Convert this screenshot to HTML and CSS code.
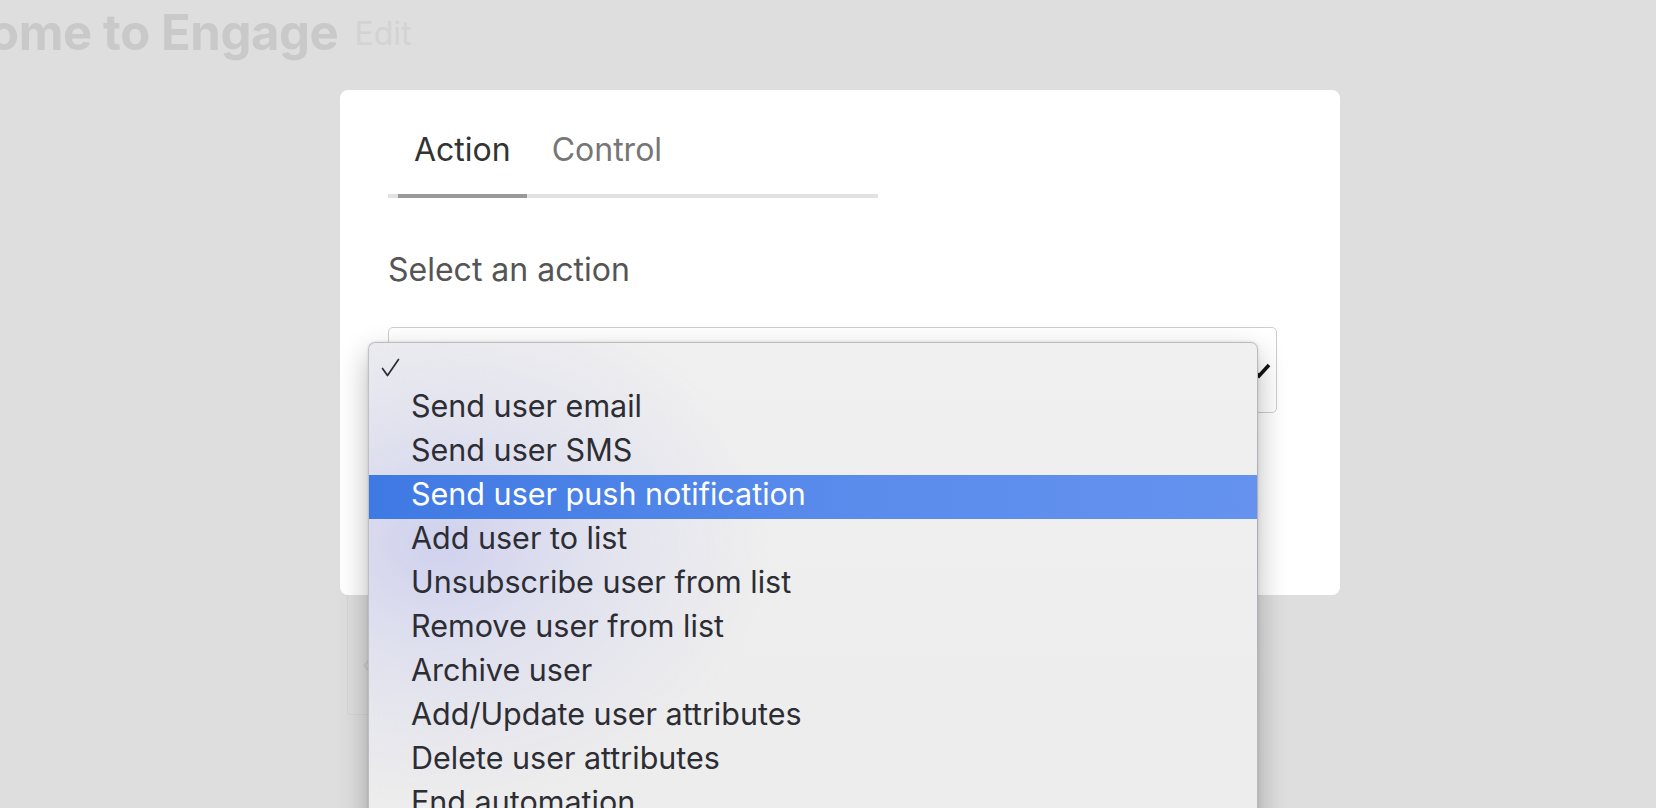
FILE: index.html
```html
<!DOCTYPE html>
<html lang="en">
<head>
<meta charset="utf-8">
<title>Engage</title>
<link rel="stylesheet" href="styles.css">
</head>
<body>
<div class="page">
  <header class="page-header">
    <h1 class="page-title">Welcome to Engage</h1>
    <span class="edit-link">Edit</span>
  </header>

  <div class="stage">
    <section class="modal">
      <nav class="tabs">
        <div class="tab tab-active">Action</div>
        <div class="tab tab-second">Control</div>
      </nav>
      <div class="field-label">Select an action</div>
      <div class="select-wrap">
        <div class="select-box">
          <svg class="select-arrow" width="24" height="24" viewBox="0 0 24 24" aria-hidden="true">
            <path d="M4 11 L10 17 L20 6" fill="none" stroke="#111" stroke-width="3.6" stroke-linecap="butt" stroke-linejoin="miter"/>
          </svg>
        </div>
        <ul class="menu">
          <li class="menu-item menu-checked">
            <svg class="check" width="20" height="20" viewBox="0 0 20 20" aria-hidden="true">
              <path d="M1.5 10.5 L6.5 17.5 L17.5 1.5" fill="none" stroke="#2d2d34" stroke-width="1.7" stroke-linecap="round" stroke-linejoin="round"/>
            </svg>
          </li>
          <li class="menu-item">Send user email</li>
          <li class="menu-item">Send user SMS</li>
          <li class="menu-item menu-hover">Send user push notification</li>
          <li class="menu-item">Add user to list</li>
          <li class="menu-item">Unsubscribe user from list</li>
          <li class="menu-item">Remove user from list</li>
          <li class="menu-item">Archive user</li>
          <li class="menu-item">Add/Update user attributes</li>
          <li class="menu-item">Delete user attributes</li>
          <li class="menu-item">End automation</li>
          <li class="menu-item">Wait</li>
        </ul>
      </div>
    </section>
    <div class="ghost-box"><span class="ghost-icon">‹</span></div>
  </div>
</div>
</body>
</html>
```

FILE: styles.css
```css
html, body {
  margin: 0;
  padding: 0;
  height: 100%;
  overflow: hidden;
}

body {
  background: #dedede;
  font-family: Inter, "Noto Sans", "Liberation Sans", sans-serif;
}

.page {
  width: 1656px;
  height: 808px;
  overflow: hidden;
}

.page-header {
  display: flex;
  align-items: flex-start;
  gap: 16px;
  padding-top: 3px;
  margin-left: -129px;
  height: 60px;
}

.page-title {
  margin: 0;
  font-size: 49px;
  line-height: 60px;
  font-weight: 700;
  color: #c9c9c9;
  letter-spacing: -0.4px;
  white-space: nowrap;
}

.edit-link {
  font-size: 32px;
  line-height: 60px;
  padding-top: 1px;
  color: #d3d3d3;
}

.stage {
  margin-left: 340px;
  margin-top: 27px;
}

.modal {
  position: relative;
  width: 1000px;
  height: 505px;
  box-sizing: border-box;
  background: #ffffff;
  border-radius: 8px;
  padding: 40px 0 0 48px;
}

.tabs {
  display: flex;
  width: 490px;
  border-bottom: 4px solid #e2e2e2;
}

.tab {
  font-size: 32px;
  line-height: 40px;
  padding: 0 16px 24px;
  color: #767676;
  margin-bottom: -4px;
  border-bottom: 4px solid transparent;
}

.tab-active {
  margin-left: 10px;
  color: #333333;
  border-bottom-color: #999999;
}

.tab-second {
  padding-left: 25px;
}

.field-label {
  margin-top: 52px;
  font-size: 32px;
  line-height: 40px;
  color: #555555;
}

.select-wrap {
  position: relative;
  margin-top: 37px;
  width: 889px;
}

.select-box {
  height: 86px;
  box-sizing: border-box;
  border: 1.5px solid #cdcdcd;
  border-radius: 5px;
  background: #ffffff;
  display: flex;
  align-items: center;
  justify-content: flex-end;
  padding-right: 3px;
}

.select-arrow {
  display: block;
  margin-top: 2px;
}

.menu {
  position: absolute;
  z-index: 5;
  left: -20px;
  top: 15px;
  width: 890px;
  height: 540px;
  margin: 0;
  padding: 0;
  list-style: none;
  box-sizing: border-box;
  border: 1px solid rgba(0, 0, 0, 0.2);
  border-radius: 7px;
  background:
    radial-gradient(ellipse 330px 260px at 70px 200px, rgba(206, 208, 238, 0.95) 0%, rgba(216, 217, 238, 0.6) 45%, rgba(230, 230, 240, 0) 100%),
    linear-gradient(180deg, #f0f0f0 0%, #ececec 100%);
  box-shadow: 0 12px 30px rgba(0, 0, 0, 0.28), 0 0 3px rgba(0, 0, 0, 0.12);
  overflow: hidden;
}

.menu-item {
  height: 44px;
  box-sizing: border-box;
  padding: 0 0 7px 42px;
  font-size: 30.5px;
  line-height: 37px;
  color: #2d2d34;
  white-space: nowrap;
}

.menu-checked {
  position: relative;
}

.check {
  position: absolute;
  left: 12px;
  top: 15px;
  display: block;
}

.menu-hover {
  background: linear-gradient(90deg, #3f79e3 0%, #5a8cec 55%, #6592ef 100%);
  color: #ffffff;
}

.ghost-box {
  width: 300px;
  height: 120px;
  margin-left: 7px;
  box-sizing: border-box;
  border: 1px solid #d6d6d6;
  border-top: none;
  border-radius: 0 0 4px 4px;
  padding: 55px 0 0 14px;
}

.ghost-icon {
  font-size: 24px;
  color: #cfcfcf;
}
```
